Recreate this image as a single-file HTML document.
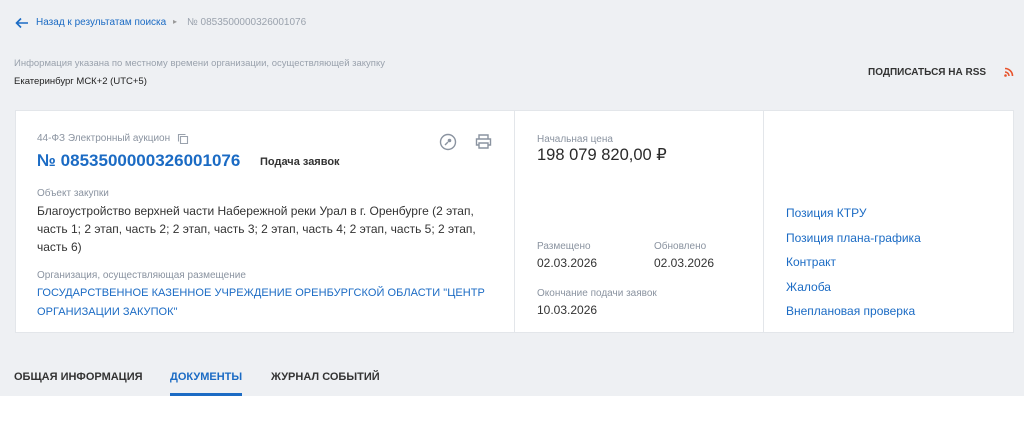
<!DOCTYPE html>
<html><head><meta charset="utf-8"><style>
*{margin:0;padding:0;box-sizing:border-box}
body{width:1024px;height:430px;background:#fff;font-family:"Liberation Sans",sans-serif;position:relative;overflow:hidden}
.top{position:absolute;left:0;top:0;width:1024px;height:396px;background:#eef0f3}
.a{position:absolute;white-space:nowrap}
.blue{color:#1b6bc4}
.card{position:absolute;left:15px;top:110px;width:999px;height:223px;background:#fff;border:1px solid #e3e6ea}
.v{position:absolute;top:0;width:1px;height:221px;background:#e3e6ea}
.lbl{font-size:10px;color:#8a93a0}
.txt{font-size:12px;color:#333;line-height:18px}
.lnk{font-size:12px;color:#1b6bc4}
</style></head><body>
<div class="top"></div>
<svg class="a" style="left:15px;top:17px" width="14" height="12" viewBox="0 0 14 12"><path d="M13 6H2M6 1.5L1.5 6 6 10.5" stroke="#1b6bc4" stroke-width="1.6" fill="none"/></svg>
<div class="a blue" style="left:36px;top:17px;font-size:10px">Назад к результатам поиска</div>
<div class="a" style="left:173px;top:17px;font-size:8px;color:#999">▸</div>
<div class="a" style="left:187px;top:17px;font-size:10px;color:#9aa2ad">№ 0853500000326001076</div>
<div class="a" style="left:14px;top:58px;font-size:9.5px;color:#9aa2ad">Информация указана по местному времени организации, осуществляющей закупку</div>
<div class="a" style="left:14px;top:76px;font-size:9.5px;color:#222">Екатеринбург МСК+2 (UTC+5)</div>
<div class="a" style="left:868px;top:67px;font-size:10px;font-weight:bold;color:#333">ПОДПИСАТЬСЯ НА RSS</div>
<svg class="a" style="left:1004px;top:67px" width="10" height="10" viewBox="0 0 10 10"><circle cx="1.5" cy="8.5" r="1.3" fill="#e8532c"/><path d="M1 5a4 4 0 014 4M1 1.5a7.5 7.5 0 017.5 7.5" stroke="#e8532c" stroke-width="1.6" fill="none"/></svg>
<div class="card">
<div class="v" style="left:498px"></div><div class="v" style="left:747px"></div>
<div class="a lbl" style="left:21px;top:22px">44-ФЗ Электронный аукцион</div>
<svg class="a" style="left:161px;top:22px" width="12" height="12" viewBox="0 0 12 12"><path d="M3.5 3.5h7v7h-7z M1.5 8.5v-7h7" stroke="#9aa2ad" stroke-width="1.1" fill="none"/></svg>
<svg class="a" style="left:423px;top:22px" width="18" height="18" viewBox="0 0 18 18"><circle cx="9" cy="9" r="7.5" stroke="#8a93a0" stroke-width="1.4" fill="none"/><path d="M6 12l3-3" stroke="#8a93a0" stroke-width="1.4"/><circle cx="10.5" cy="7.5" r="1.8" fill="#8a93a0"/></svg>
<svg class="a" style="left:459px;top:22px" width="17" height="17" viewBox="0 0 17 17"><path d="M4 6V2h9v4M4 12H1.5V6h14v6H13M4 10h9v5H4z" stroke="#8a93a0" stroke-width="1.4" fill="none"/></svg>
<div class="a blue" style="left:21px;top:40px;font-size:17px;font-weight:bold">№ 0853500000326001076</div>
<div class="a" style="left:244px;top:45px;font-size:11px;font-weight:bold;color:#333">Подача заявок</div>
<div class="a lbl" style="left:21px;top:77px">Объект закупки</div>
<div class="a txt" style="left:21px;top:91px;white-space:normal;width:460px">Благоустройство верхней части Набережной реки Урал в г. Оренбурге (2 этап, часть 1; 2 этап, часть 2; 2 этап, часть 3; 2 этап, часть 4; 2 этап, часть 5; 2 этап, часть 6)</div>
<div class="a lbl" style="left:21px;top:159px">Организация, осуществляющая размещение</div>
<div class="a lnk" style="left:21px;top:173px;white-space:normal;width:460px;line-height:19px;font-size:11px;letter-spacing:0.05px">ГОСУДАРСТВЕННОЕ КАЗЕННОЕ УЧРЕЖДЕНИЕ ОРЕНБУРГСКОЙ ОБЛАСТИ "ЦЕНТР ОРГАНИЗАЦИИ ЗАКУПОК"</div>
<div class="a lbl" style="left:521px;top:23px">Начальная цена</div>
<div class="a" style="left:521px;top:34px;font-size:16.5px;color:#2a2a2a">198 079 820,00 ₽</div>
<div class="a lbl" style="left:521px;top:130px">Размещено</div>
<div class="a txt" style="left:521px;top:143px">02.03.2026</div>
<div class="a lbl" style="left:638px;top:130px">Обновлено</div>
<div class="a txt" style="left:638px;top:143px">02.03.2026</div>
<div class="a lbl" style="left:521px;top:177px">Окончание подачи заявок</div>
<div class="a txt" style="left:521px;top:190px">10.03.2026</div>
<div class="a lnk" style="left:770px;top:95px">Позиция КТРУ</div>
<div class="a lnk" style="left:770px;top:120px">Позиция плана-графика</div>
<div class="a lnk" style="left:770px;top:144px">Контракт</div>
<div class="a lnk" style="left:770px;top:169px">Жалоба</div>
<div class="a lnk" style="left:770px;top:193px">Внеплановая проверка</div>
</div>
<div class="a" style="left:14px;top:371px;font-size:11px;font-weight:bold;color:#333">ОБЩАЯ ИНФОРМАЦИЯ</div>
<div class="a blue" style="left:170px;top:371px;font-size:11px;font-weight:bold">ДОКУМЕНТЫ</div>
<div class="a" style="left:170px;top:393px;width:72px;height:3px;background:#1b6bc4"></div>
<div class="a" style="left:271px;top:371px;font-size:11px;font-weight:bold;color:#333">ЖУРНАЛ СОБЫТИЙ</div>
</body></html>
